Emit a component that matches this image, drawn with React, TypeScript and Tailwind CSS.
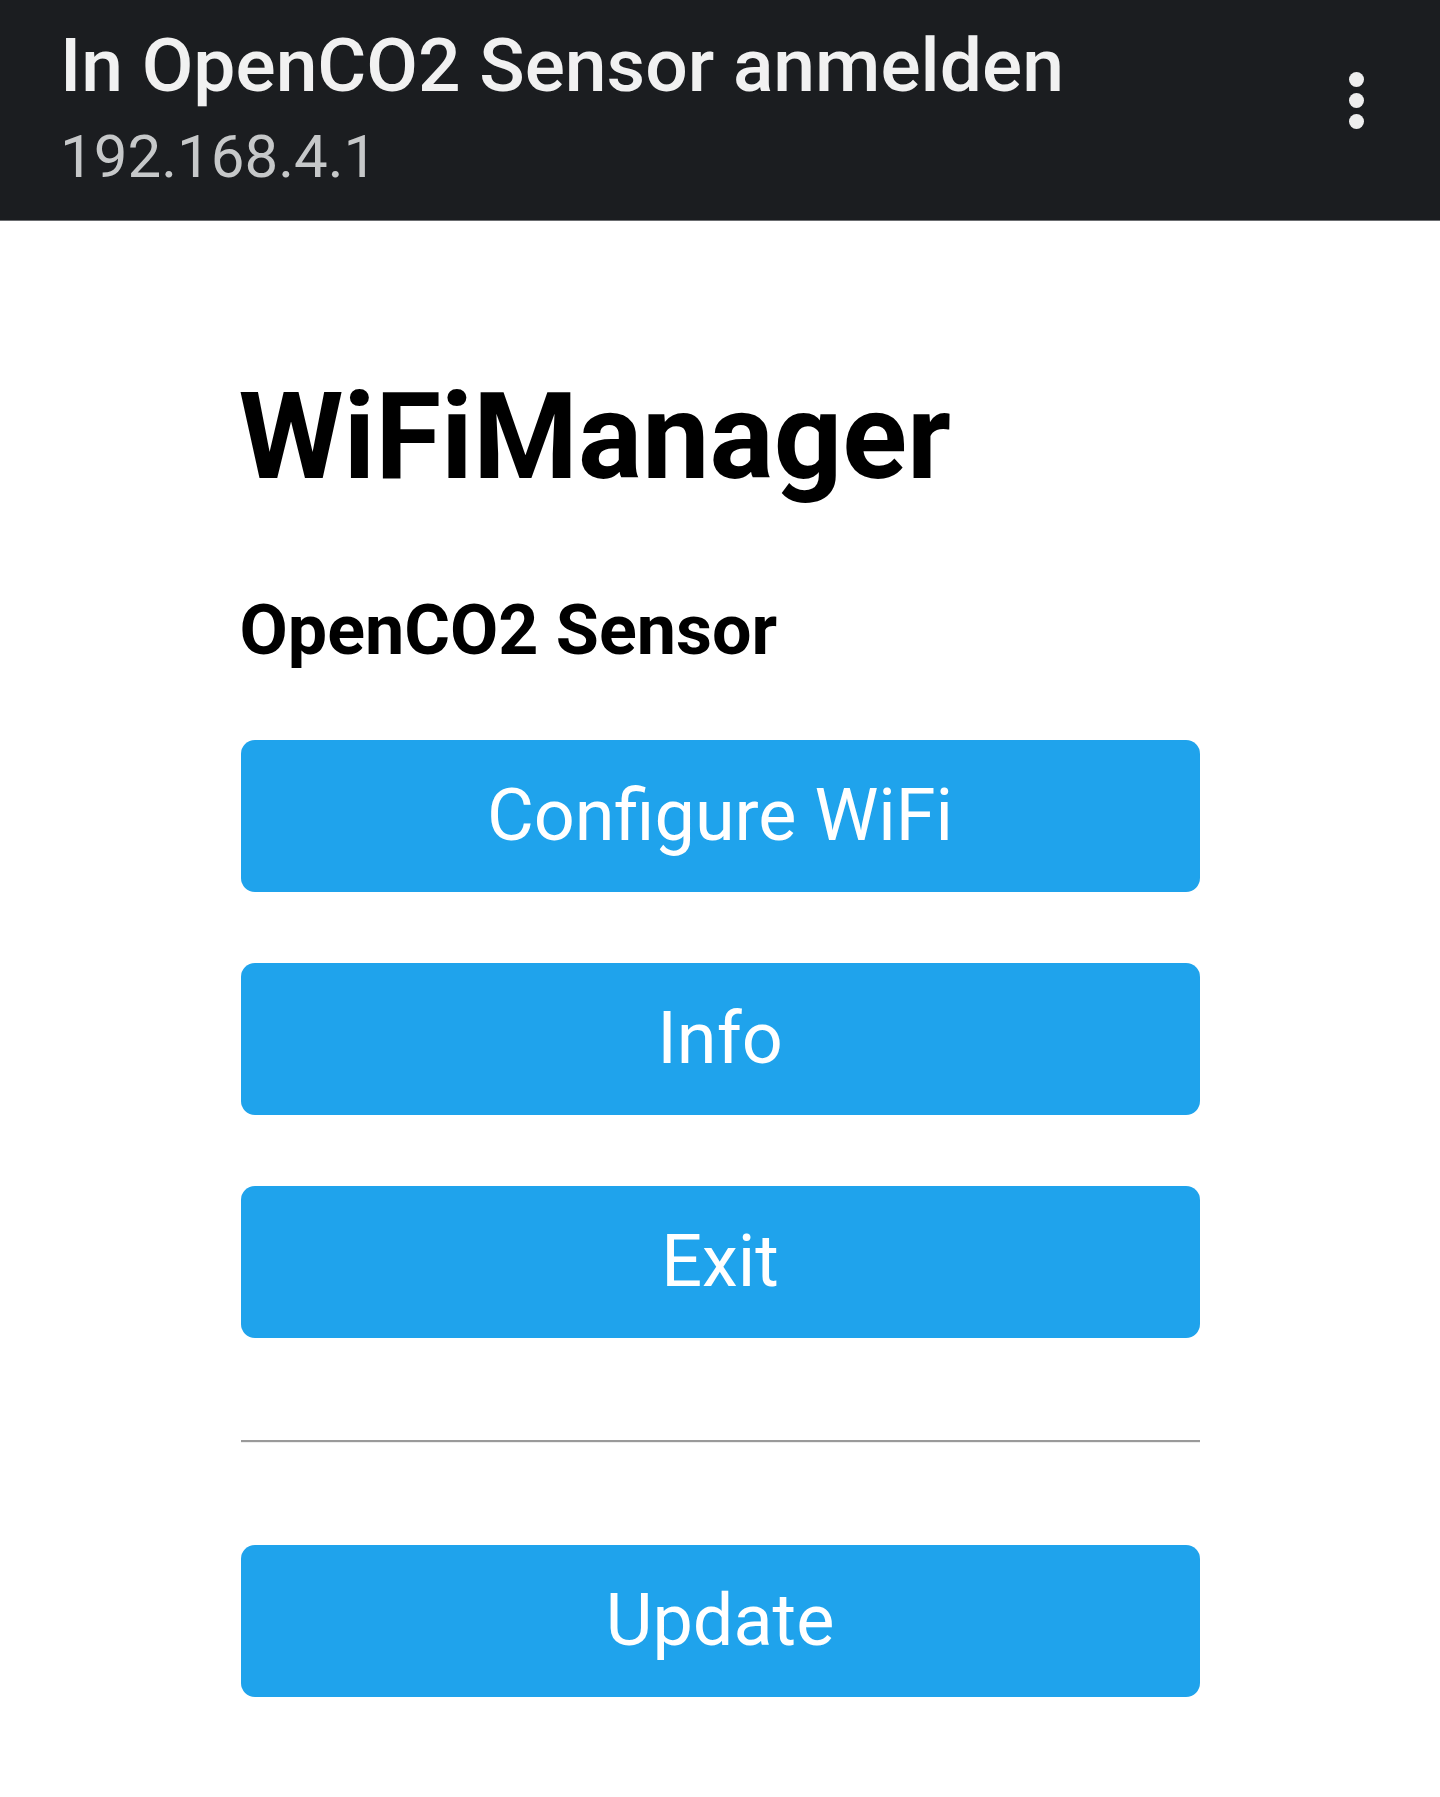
import React from "react";

function Btn({ label }: { label: string }) {
  return (
    <button className="flex h-[152px] w-full items-center justify-center rounded-[14px] bg-[#1fa3ec] text-[72px] leading-[72px] font-normal text-white">
      {label}
    </button>
  );
}

export default function App() {
  return (
    <div className="min-h-[1797px] w-full bg-white" style={{ fontFamily: "Roboto, 'Liberation Sans', sans-serif" }}>
      <header className="flex h-[221px] items-start justify-between border-b border-[#6b6d70] bg-[#1b1d20] pl-[60px] pr-[76px]">
        <div className="flex flex-col pt-[28px]">
          <div className="text-[75px] leading-[75px] font-medium text-[#f1f1f1]">In OpenCO2 Sensor anmelden</div>
          <div className="mt-[24px] text-[60px] leading-[60px] font-normal text-[#c6c8c9]">192.168.4.1</div>
        </div>
        <div className="mt-[72px] flex flex-col gap-[6px]">
          <div className="h-[15px] w-[15px] rounded-full bg-[#eeeeee]" />
          <div className="h-[15px] w-[15px] rounded-full bg-[#eeeeee]" />
          <div className="h-[15px] w-[15px] rounded-full bg-[#eeeeee]" />
        </div>
      </header>
      <main className="mx-auto flex w-[959px] flex-col">
        <h1 className="ml-[-2px] mt-[156px] text-[120px] leading-[120px] font-bold text-black">WiFiManager</h1>
        <h3 className="ml-[-1px] mt-[98px] text-[70px] leading-[70px] font-bold text-black">OpenCO2 Sensor</h3>
        <div className="mt-[75px] flex flex-col gap-[71px]">
          <Btn label="Configure WiFi" />
          <Btn label="Info" />
          <Btn label="Exit" />
        </div>
        <div className="mt-[102px] h-[3px] w-full border-t-2 border-[#9a9a9a] bg-[#eeeeee]" />
        <div className="mt-[102px]">
          <Btn label="Update" />
        </div>
      </main>
    </div>
  );
}
